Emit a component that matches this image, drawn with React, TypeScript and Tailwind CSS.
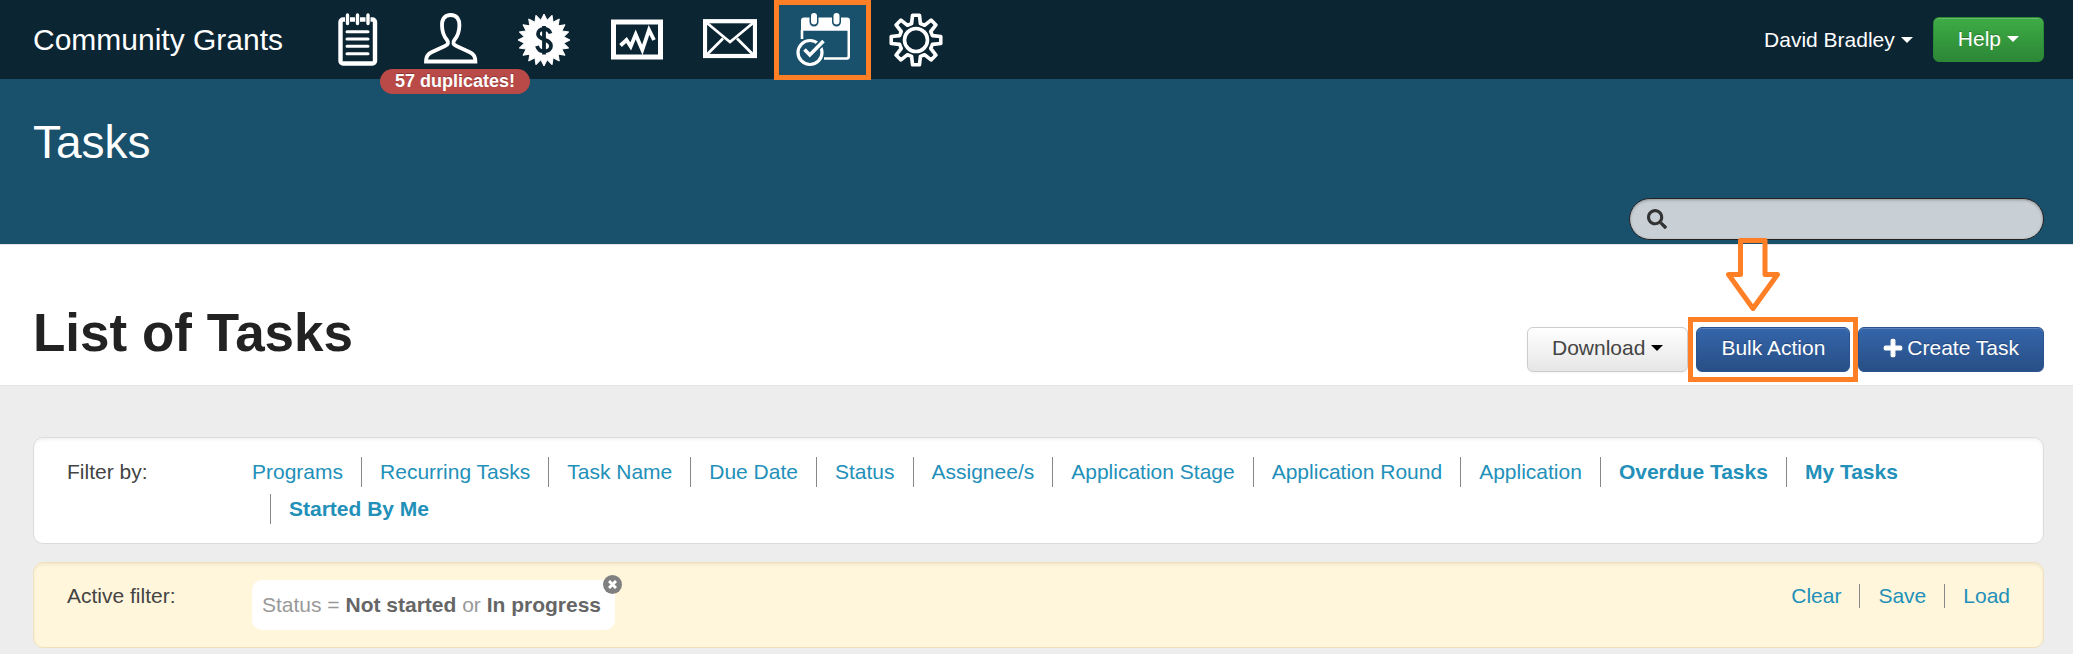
import { ReactNode, useState } from "react";
import { FaPlus, FaSearch } from "react-icons/fa";

interface NavItem {
  label: string;
  icon: ReactNode;
  badge?: string;
  active?: boolean;
}

interface FilterLink {
  label: string;
  bold?: boolean;
}

const polar = (radius: number, degrees: number) => {
  const rad = (degrees * Math.PI) / 180;
  return `${(27 + radius * Math.sin(rad)).toFixed(2)},${(27 - radius * Math.cos(rad)).toFixed(2)}`;
};

const sealPoints = Array.from({ length: 40 }, (_, i) => polar(i % 2 ? 20 : 26, i * 9)).join(" ");

const gearPoints = Array.from({ length: 8 }, (_, i) => {
  const a = i * 45;
  return [polar(17, a - 15), polar(25, a - 8), polar(25, a + 8), polar(17, a + 15)].join(" ");
}).join(" ");

const NotebookIcon = () => (
  <svg width="54" height="54" viewBox="0 0 54 54" fill="none" stroke="#fff">
    <rect x="9.5" y="6.5" width="34.5" height="44" rx="2.5" strokeWidth="4.4" />
    <path d="M16.5 1v11M26.5 1v11M37 1v11" stroke="#0b2533" strokeWidth="5" />
    <path d="M16.5 2v8.500M26.5 2v8.500M37 2v8.500" strokeWidth="3.4" strokeLinecap="round" />
    <path d="M16 18.7h21M16 26h21M16 33.3h21M16 40.7h21" strokeWidth="3" strokeLinecap="round" />
  </svg>
);

const PersonIcon = () => (
  <svg width="54" height="54" viewBox="0 0 54 54" fill="none" stroke="#fff" strokeWidth="3.8">
    <path d="M26.700 2C20.500 2 17.800 6.500 18 12.500c.1 6.500 2 11 5 14.500 1.800 2.400 1.400 4.600-2 6L7.500 39.300C3.700 41 2 43.300 2 48.500h49.400c0-5.200-1.700-7.500-5.500-9.200L32.400 33c-3.400-1.400-3.800-3.600-2-6 3-3.500 4.900-8 5-14.500C35.600 6.500 32.900 2 26.700 2z" />
  </svg>
);

const DollarIcon = () => (
  <svg width="54" height="54" viewBox="0 0 54 54">
    <polygon points={sealPoints} fill="#fff" stroke="#fff" strokeLinejoin="round" />
    <path d="M33.500 20.500c-1-3-3-4.500-6.500-4.500-3.800 0-6 2-6 5 0 6.500 13 4.500 13 12 0 3.200-3 5.300-7 5.300-4 0-6-1.800-7-5.300M27 13v28.500" fill="none" stroke="#0b2533" strokeWidth="3.800" />
  </svg>
);

const ChartIcon = () => (
  <svg width="54" height="54" viewBox="0 0 54 54" fill="none" stroke="#fff">
    <rect x="3.500" y="9" width="47" height="35" strokeWidth="5" />
    <path d="M10.500 32.500l6-5.500 4.200 6.500 5-12L32.300 37 39 17l5 10" strokeWidth="3.800" />
  </svg>
);

const MailIcon = () => (
  <svg width="54" height="54" viewBox="0 0 54 54" fill="none" stroke="#fff">
    <rect x="2" y="8.200" width="50" height="34.800" strokeWidth="4.200" />
    <path d="M4 10l17.500 14.500L27 29l5.500-4.500L50 10M4 41.500l16-16M50 41.500l-16-16" strokeWidth="2.800" />
  </svg>
);

const CalendarIcon = () => (
  <svg width="54" height="54" viewBox="0 0 54 54" fill="none" stroke="#fff">
    <path d="M5 17.800V7.500q0-3 3-3h43q3 0 3 3v10.300z" fill="#fff" stroke="none" />
    <path d="M18 1v8M40.500 1v8" stroke="#19506b" strokeWidth="9" strokeLinecap="round" />
    <path d="M18 3v5.500M40.500 3v5.500" strokeWidth="6" strokeLinecap="round" />
    <path d="M6 17v9M52.800 17v26q0 2.500-2.500 2.500H28" strokeWidth="2.600" />
    <circle cx="14" cy="39.500" r="12" strokeWidth="3.200" />
    <path d="M9 36.500l4.800 5L27.500 28" stroke="#19506b" strokeWidth="7" />
    <path d="M8.500 36.500l5.300 5.500L27.500 28" strokeWidth="3.600" />
  </svg>
);

const GearIcon = () => (
  <svg width="54" height="54" viewBox="0 0 54 54" fill="none" stroke="#fff" strokeWidth="3.600" strokeLinejoin="round">
    <polygon points={gearPoints} />
    <circle cx="27" cy="27" r="11.500" />
  </svg>
);

const navItems: NavItem[] = [
  { label: "Applications", icon: <NotebookIcon /> },
  { label: "Contacts", icon: <PersonIcon />, badge: "57 duplicates!" },
  { label: "Payments", icon: <DollarIcon /> },
  { label: "Reports", icon: <ChartIcon /> },
  { label: "Messages", icon: <MailIcon /> },
  { label: "Tasks", icon: <CalendarIcon />, active: true },
  { label: "Settings", icon: <GearIcon /> },
];

const filters: FilterLink[] = [
  { label: "Programs" },
  { label: "Recurring Tasks" },
  { label: "Task Name" },
  { label: "Due Date" },
  { label: "Status" },
  { label: "Assignee/s" },
  { label: "Application Stage" },
  { label: "Application Round" },
  { label: "Application" },
  { label: "Overdue Tasks", bold: true },
  { label: "My Tasks", bold: true },
  { label: "Started By Me", bold: true },
];

const Caret = () => (
  <svg width="12" height="6" viewBox="0 0 12 6" fill="currentColor">
    <path d="M0 0h12L6 6z" />
  </svg>
);

const Header = () => (
  <header className="flex h-[79px] items-center bg-[#0b2533] pl-[33px] pr-[29px] text-white">
    <a href="#" className="w-[278px] shrink-0 text-[30px] leading-10">Community Grants</a>
    <nav className="flex h-full">
      {navItems.map(item => (
        <a
          key={item.label}
          href="#"
          aria-label={item.label}
          className={`relative flex w-[93px] items-center justify-center ${item.active ? "bg-[#19506b]" : ""}`}
        >
          {item.icon}
          {item.badge && (
            <span className="absolute -left-6 top-[69px] z-10 whitespace-nowrap rounded-full bg-[#b94a48] px-[15px] text-lg font-bold leading-[25px] [text-shadow:0_-1px_0_rgba(0,0,0,0.25)]">
              {item.badge}
            </span>
          )}
          {item.active && <span className="absolute -inset-x-0.5 -bottom-px top-0 border-[5px] border-[#ff7f27]" />}
        </a>
      ))}
    </nav>
    <div className="ml-auto flex items-center gap-5 text-[21px]">
      <button className="flex items-center gap-1.5">
        David Bradley <Caret />
      </button>
      <button className="flex h-[45px] items-center gap-1.5 rounded-md border border-[#2b8a36] bg-linear-to-b from-[#3eac46] to-[#2c8736] px-6 pb-0.5 shadow-[inset_0_1px_0_rgba(255,255,255,0.2)] [text-shadow:0_-1px_0_rgba(0,0,0,0.25)]">
        Help <Caret />
      </button>
    </div>
  </header>
);

const App = () => {
  const [search, setSearch] = useState("");
  const [filterActive, setFilterActive] = useState(true);

  return (
    <div className="flex min-h-screen flex-col bg-[#ededed] font-['Liberation_Sans',Arial,sans-serif] text-[21px] text-[#444]">
      <Header />

      <section className="bg-[#19506b] pb-1 pl-[33px] pr-[29px] pt-10">
        <h1 className="text-[46px] leading-[46px] text-white">Tasks</h1>
        <label className="ml-auto mt-[33px] flex h-[42px] w-[415px] items-center rounded-full border border-[#222] bg-[#c8d0d6] pl-[17px] pr-4 shadow-[inset_0_1px_3px_rgba(0,0,0,0.3)]">
          <FaSearch size={20} className="shrink-0 text-[#333]" />
          <input
            type="text"
            aria-label="Search"
            className="ml-3 w-full bg-transparent outline-none"
            value={search}
            onChange={e => setSearch(e.target.value)}
          />
        </label>
      </section>

      <section className="flex items-end justify-between border-y border-[#e5e5e5] bg-white pb-[13px] pl-[33px] pr-[29px] pt-[61px]">
        <h2 className="mb-[13px] text-[53px] font-bold leading-[53px] text-[#222]">List of Tasks</h2>
        <div className="flex gap-2">
          <button className="flex h-[45px] items-center gap-1.5 rounded-md border border-[#ccc] bg-linear-to-b from-white to-[#e6e6e6] px-6 pb-1 shadow-[0_1px_2px_rgba(0,0,0,0.05)]">
            Download <span className="text-black"><Caret /></span>
          </button>
          <div className="relative">
            <button className="h-[45px] rounded-md border border-[#2a5390] bg-linear-to-b from-[#3465ab] to-[#284f86] px-6 pb-1 text-white shadow-[inset_0_1px_0_rgba(255,255,255,0.2)] [text-shadow:0_-1px_0_rgba(0,0,0,0.25)]">
              Bulk Action
            </button>
            <span className="pointer-events-none absolute -inset-x-2 -inset-y-2.5 border-[5px] border-[#ff7f27]" />
            <svg
              className="absolute bottom-full left-[30px] mb-4"
              width="54"
              height="73"
              viewBox="0 0 54 73"
              fill="#fff"
              stroke="#ff7f27"
              strokeWidth="5"
              strokeLinejoin="round"
            >
              <path d="M14.500 2.500h24.500v34h12.500L27 70.500 2.500 36.500h12z" />
              <path d="M17 5h19.500v1H17z" fill="#19506b" stroke="none" />
            </svg>
          </div>
          <button className="flex h-[45px] items-center gap-1 rounded-md border border-[#2a5390] bg-linear-to-b from-[#3465ab] to-[#284f86] px-6 pb-1 text-white shadow-[inset_0_1px_0_rgba(255,255,255,0.2)] [text-shadow:0_-1px_0_rgba(0,0,0,0.25)]">
            <FaPlus size={20} stroke="#fff" strokeWidth={30} /> Create Task
          </button>
        </div>
      </section>

      <main className="flex flex-col gap-[18px] pb-[7px] pl-[33px] pr-[29px] pt-[51px]">
        <div className="flex rounded-[10px] border border-[#dcdcdc] bg-white px-[33px] py-[19px] shadow-[inset_0_2px_3px_rgba(0,0,0,0.05)]">
          <span className="w-[185px] shrink-0 leading-[30px]">Filter by:</span>
          <ul className="flex flex-wrap gap-y-[7px]">
            {filters.map((filter, i) => (
              <li key={filter.label} className={`leading-[30px] ${i > 0 ? "ml-[18px] border-l border-[#888] pl-[18px]" : ""}`}>
                <a href="#" className={`text-[#2290b9] ${filter.bold ? "font-bold" : ""}`}>{filter.label}</a>
              </li>
            ))}
          </ul>
        </div>

        <div className="flex items-start rounded-[10px] border border-[#f0e0bb] bg-[#fff6db] px-[33px] py-[17px] shadow-[inset_0_2px_3px_rgba(0,0,0,0.06)]">
          <span className="mt-px w-[185px] shrink-0 leading-[30px]">Active filter:</span>
          {filterActive && (
            <div className="relative rounded-[10px] bg-white pl-2.5 pr-3.5 leading-[50px] text-[#999]">
              Status = <b className="text-[#666]">Not started</b> or <b className="text-[#666]">In progress</b>
              <button
                aria-label="Remove filter"
                className="absolute -right-[7px] -top-[5px] flex size-[19px] items-center justify-center rounded-full bg-[#808080]"
                onClick={() => setFilterActive(false)}
              >
                <svg width="9" height="9" viewBox="0 0 9 9" stroke="#fff" strokeWidth="3">
                  <path d="M1 1l7 7M8 1L1 8" />
                </svg>
              </button>
            </div>
          )}
          <div className="ml-auto mt-1 flex leading-6 text-[#2290b9]">
            <a href="#">Clear</a>
            <a href="#" className="ml-[18px] border-l border-[#888] pl-[18px]">Save</a>
            <a href="#" className="ml-[18px] border-l border-[#888] pl-[18px]">Load</a>
          </div>
        </div>
      </main>
    </div>
  );
};

export default App;
